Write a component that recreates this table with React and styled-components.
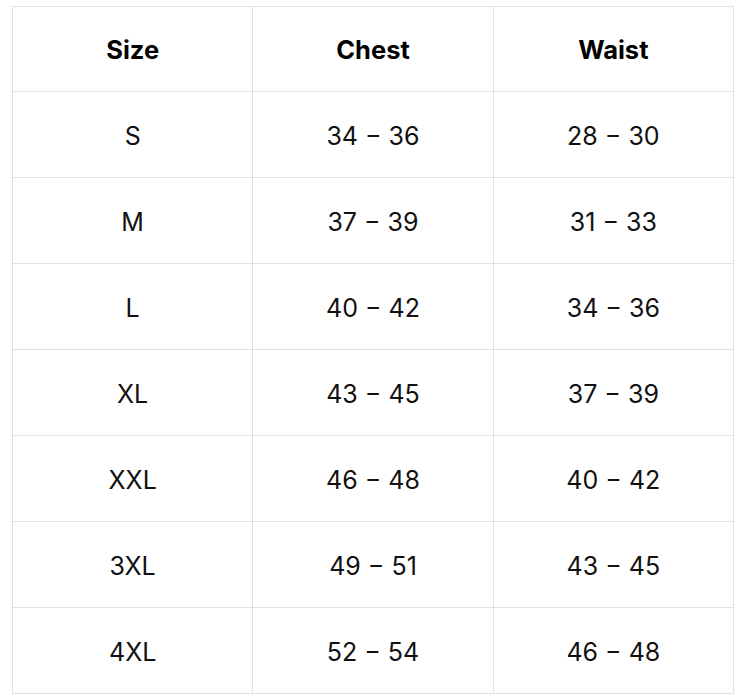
import React from 'react';
import styled, { createGlobalStyle } from 'styled-components';

const GlobalStyles = createGlobalStyle`
	body {
		margin: 0;
		background: #ffffff;
		font-family: Inter, 'Open Sans', sans-serif;
		color: #111111;
	}
`;

const SIZES = [
	['S', '34 − 36', '28 − 30'],
	['M', '37 − 39', '31 − 33'],
	['L', '40 − 42', '34 − 36'],
	['XL', '43 − 45', '37 − 39'],
	['XXL', '46 − 48', '40 − 42'],
	['3XL', '49 − 51', '43 − 45'],
	['4XL', '52 − 54', '46 − 48'],
];

export default function App() {
	return (
		<Page>
			<GlobalStyles />
			<SizeTable>
				<thead>
					<tr>
						<HeadCell>Size</HeadCell>
						<HeadCell>Chest</HeadCell>
						<HeadCell>Waist</HeadCell>
					</tr>
				</thead>
				<tbody>
					{SIZES.map(row => (
						<tr key={row[0]}>
							{row.map((value, i) => (
								<Cell key={i}>{value}</Cell>
							))}
						</tr>
					))}
				</tbody>
			</SizeTable>
		</Page>
	);
}

const Page = styled.div`
	padding: 6px 6px 6px 12px;
`;

const SizeTable = styled.table`
	border-collapse: collapse;
	width: 722px;
	table-layout: fixed;
`;

const Cell = styled.td`
	box-sizing: border-box;
	height: 86px;
	padding: 2px 0 0;
	border: 1.5px solid #e0e0e0;
	text-align: center;
	vertical-align: middle;
	font-size: 25px;
	font-weight: 400;
	color: #111111;
`;

const HeadCell = styled(Cell).attrs({ as: 'th' })`
	height: 85px;
	padding: 1px 0 0;
	font-weight: 700;
	font-size: 25.5px;
	color: #000000;
`;
